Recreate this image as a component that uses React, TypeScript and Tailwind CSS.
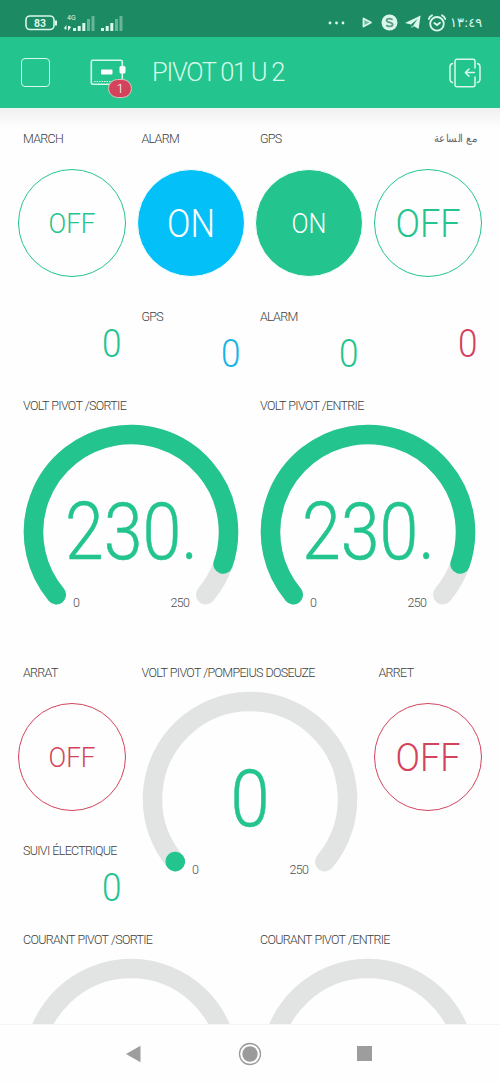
import type { ReactNode } from "react";
import clsx from "clsx";

type Tone = "green" | "blue" | "red";

const textTone: Record<Tone, string> = {
  green: "text-[#23c48e]",
  blue: "text-[#16b4e6]",
  red: "text-[#d3435c]",
};

const fillTone: Record<Tone, string> = {
  green: "bg-[#23c48e]",
  blue: "bg-[#04c0f8]",
  red: "bg-[#d3435c]",
};

const borderTone: Record<Tone, string> = {
  green: "border-[#23c48e]",
  blue: "border-[#04c0f8]",
  red: "border-[#d3435c]",
};

interface WidgetProps {
  className: string;
  label?: string;
  rtl?: boolean;
  children: ReactNode;
}

function Widget({ className, label, rtl, children }: WidgetProps) {
  return (
    <section className={clsx("flex flex-col", className)}>
      {label && (
        <h2
          dir={rtl ? "rtl" : "ltr"}
          className={clsx(
            "h-[22px] leading-[22px] whitespace-nowrap",
            rtl
              ? "origin-right scale-x-92 px-[11px] text-[11px] text-[#6a6a6a] font-['DejaVu_Sans',sans-serif]"
              : "px-2.5 text-[12.5px] font-light tracking-[-0.7px] [word-spacing:0.5px] text-[#404040]",
          )}
        >
          {label}
        </h2>
      )}
      {children}
    </section>
  );
}

interface SwitchProps {
  className: string;
  label: string;
  on?: boolean;
  large?: boolean;
  tone: Tone;
  rtl?: boolean;
}

function SwitchWidget({ className, label, on, large, tone, rtl }: SwitchProps) {
  const width = on ? (large ? 46 : 33) : large ? 63 : 45;
  return (
    <Widget className={className} label={label} rtl={rtl}>
      <button
        className={clsx(
          "mx-auto mt-[19px] size-[108px] rounded-full border",
          on ? [fillTone[tone], "border-white text-white"] : [borderTone[tone], textTone[tone]],
        )}
      >
        <svg viewBox="0 0 106 106" className="size-full">
          <text
            x={(106 - width) / 2 - 1}
            y={large ? 66.5 : 63}
            fontSize={large ? 39 : 28}
            textLength={width + 2}
            lengthAdjust="spacingAndGlyphs"
            fill="currentColor"
          >
            {on ? "ON" : "OFF"}
          </text>
        </svg>
      </button>
    </Widget>
  );
}

interface ValueProps {
  className: string;
  label?: string;
  tone: Tone;
}

function ValueWidget({ className, label, tone }: ValueProps) {
  return (
    <Widget className={className} label={label}>
      <p
        className={clsx(
          "origin-right scale-x-90 pr-[11px] text-right text-[39px] leading-[52px] font-light",
          !label && "pt-3",
          textTone[tone],
        )}
      >
        0
      </p>
    </Widget>
  );
}

const START = 140;
const SWEEP = 260;
const RADIUS = 97.5;

function arc(sweep: number) {
  const point = (deg: number) => {
    const a = (deg * Math.PI) / 180;
    return `${(118 + RADIUS * Math.cos(a)).toFixed(2)} ${(115 + RADIUS * Math.sin(a)).toFixed(2)}`;
  };
  return `M${point(START)}A${RADIUS} ${RADIUS} 0 ${sweep > 180 ? 1 : 0} 1 ${point(START + sweep)}`;
}

interface GaugeProps {
  className: string;
  label: string;
  value?: number;
  max?: number;
}

function GaugeWidget({ className, label, value, max = 250 }: GaugeProps) {
  return (
    <Widget className={className} label={label}>
      <svg viewBox="0 0 237 215" className="h-[215px] w-full" fill="none" strokeWidth="19.5" strokeLinecap="round">
        <path d={arc(SWEEP)} stroke="#e1e4e3" />
        {value !== undefined && (
          <>
            <path d={arc(Math.max((value / max) * SWEEP, 0.1))} stroke="#23c48e" />
            <text
              x={value > 0 ? 52 : 98.5}
              y="141.5"
              textLength={value > 0 ? 133 : 39}
              lengthAdjust="spacingAndGlyphs"
              fontSize="79"
              fill="#23c48e"
              stroke="#23c48e"
              strokeWidth="0.5"
            >
              {value > 0 ? `${value}.` : "0"}
            </text>
            <g stroke="none" fill="#4f4f4f" fontSize="12.5">
              <text x="60" y="190">0</text>
              <text x="157.5" y="190" textLength="19.5">{max}</text>
            </g>
          </>
        )}
      </svg>
    </Widget>
  );
}

function Signal() {
  return (
    <svg width="22" height="16" viewBox="0 0 22 16" fill="#d9f7ea">
      <rect x="0" y="13" width="3" height="3" />
      <rect x="4.7" y="11" width="3" height="5" />
      <rect x="9.3" y="8" width="3" height="8" />
      <rect x="14" y="4" width="3" height="12" opacity=".4" />
      <rect x="18.5" y="1" width="3" height="15" opacity=".4" />
    </svg>
  );
}

function StatusBar() {
  return (
    <div className="flex h-[37px] items-center bg-[#1c8a63] pt-2 pl-[25px] text-[#d9f7ea]">
      <svg width="33" height="16" viewBox="0 0 33 16">
        <rect x="1" y="1" width="28" height="13.5" rx="4" fill="none" stroke="currentColor" strokeWidth="1.6" />
        <path d="M31 5.5v5" stroke="currentColor" strokeWidth="2" />
        <text x="15" y="11.5" textAnchor="middle" fontSize="10.5" fontWeight="700" fill="currentColor">83</text>
      </svg>
      <div className="ml-1.5 flex h-[17px] w-[9px] flex-col justify-between text-[7px] leading-[8px] font-normal">
        <span className="ml-[3px] whitespace-nowrap">4G</span>
        <svg width="7" height="6" viewBox="0 0 7 6" fill="currentColor">
          <path d="M0 3 2.5 0v4.5H1zM7 2.5 4 6V1h2z" />
        </svg>
      </div>
      <div className="flex gap-[6px]">
        <Signal />
        <Signal />
      </div>
      <div className="ml-auto flex items-center">
        <svg width="17" height="4" viewBox="0 0 17 4" fill="currentColor">
          <circle cx="2" cy="2" r="1.4" />
          <circle cx="8.5" cy="2" r="1.4" />
          <circle cx="15" cy="2" r="1.4" />
        </svg>
        <svg className="ml-[17px]" width="11" height="11" viewBox="0 0 11 11">
          <path d="M1.5 1.5 9 5.5l-7.5 4z" fill="#6fb89c" stroke="currentColor" strokeWidth="1.8" strokeLinejoin="round" />
        </svg>
        <svg className="ml-2" width="17" height="17" viewBox="0 0 17 17">
          <circle cx="8.5" cy="8.5" r="8" fill="currentColor" />
          <path
            d="M11.5 5.8C10.5 4.3 5.6 4 5.6 6.5c0 2.4 6 1.3 6 4 0 2.5-5 2.3-6.3.6"
            fill="none"
            stroke="#5a9d84"
            strokeWidth="1.8"
          />
        </svg>
        <svg className="ml-[7px]" width="16" height="15" viewBox="0 0 16 15" fill="currentColor">
          <path d="M0 8 15.6.5 13.6 14 9 11.2 6.5 13 6 9.6z" />
          <path d="M6 9.6 12.5 4 8.2 10.4 6.6 12.5z" fill="#1c8a63" />
        </svg>
        <svg
          className="ml-1.5"
          width="20"
          height="18"
          viewBox="0 0 20 18"
          fill="none"
          stroke="currentColor"
          strokeWidth="1.8"
          strokeLinecap="round"
        >
          <circle cx="10" cy="9.8" r="6.8" />
          <path d="M1.8 5c.4-1.8 1.5-3 3.2-3.7M18.2 5c-.4-1.8-1.5-3-3.2-3.7M7.3 9l2.7 2 3-2.3" />
        </svg>
        <span className="ml-[3px] w-[50px] text-[13px] leading-5 font-normal tracking-[-1px] whitespace-nowrap font-['DejaVu_Sans',sans-serif]">
          ١٣:٤٩
        </span>
      </div>
    </div>
  );
}

function Header() {
  return (
    <header className="flex h-[71px] items-center bg-[#23c48e] pr-[19px] pl-[21px] text-[#d6fae9]">
      <div className="size-[29px] rounded-[4px] border-[1.5px] border-current" />
      <div className="relative ml-10 h-[27px] w-9">
        <svg width="36" height="27" viewBox="0 0 36 27" fill="none" stroke="currentColor" strokeWidth="1.6">
          <rect x="1.3" y="1.3" width="31" height="24" rx="1.5" />
          <path d="M4 22.5h26" strokeDasharray="1.5 1" strokeWidth="1" />
          <rect x="11" y="10.5" width="11.5" height="5" rx="1" fill="white" stroke="none" />
          <rect x="29.5" y="7" width="6" height="7.5" rx="1.5" fill="white" stroke="none" />
        </svg>
        <span className="absolute top-[20px] left-[18px] flex h-[19px] w-6 items-center justify-center rounded-full border-[1.5px] border-[#d9c3bd] bg-[#d3435c] text-[13px] leading-none font-light text-white">
          1
        </span>
      </div>
      <h1 className="ml-[26px] text-[25.5px] leading-none font-light tracking-[-1.3px] whitespace-nowrap">PIVOT 01 U 2</h1>
      <svg
        className="ml-auto"
        width="32"
        height="30"
        viewBox="0 0 32 30"
        fill="none"
        stroke="currentColor"
        strokeWidth="1.5"
        strokeLinecap="round"
        strokeLinejoin="round"
      >
        <path d="M26 10V3.2A2 2 0 0 0 24 1.2H8A2 2 0 0 0 6 3.2v23.6a2 2 0 0 0 2 2h16a2 2 0 0 0 2-2V19" />
        <path d="M3.5 5.5Q1 6 1 9v12q0 3 2.5 3.5M28.5 5.5Q31 6 31 9v12q0 3-2.5 3.5" />
        <path d="M25.5 14.6h-9M20 11l-3.6 3.6 3.6 3.6" />
      </svg>
    </header>
  );
}

function NavBar() {
  return (
    <nav className="flex h-[60px] border-t border-[#f5f5f5] bg-[#fefefe] pl-[125px]">
      <svg className="mt-5" width="17" height="18" viewBox="0 0 17 18">
        <path d="M1 9 15.5.8v16.4z" fill="#9d9d9d" />
      </svg>
      <svg className="mt-[17px] ml-[96px]" width="24" height="24" viewBox="0 0 24 24">
        <circle cx="12" cy="12" r="10.5" fill="none" stroke="#9a9a9a" strokeWidth="1.3" />
        <circle cx="12" cy="12" r="7.7" fill="#9a9a9a" />
      </svg>
      <div className="mt-[21px] ml-[95px] size-[15px] bg-[#9d9d9d]" />
    </nav>
  );
}

export default function App() {
  return (
    <div className="flex h-[1084px] w-[500px] flex-col overflow-hidden bg-[#fefefe] font-['Roboto','Liberation_Sans',sans-serif] font-light">
      <StatusBar />
      <Header />
      <main className="h-[916px] shrink-0 overflow-hidden bg-[linear-gradient(#f0f0f0,#fefefe_20px)] px-[13px] pt-5">
        <div className="grid auto-rows-[89px] grid-cols-4">
          <SwitchWidget className="col-start-1 row-span-2 row-start-1" label="MARCH" tone="green" />
          <SwitchWidget className="col-start-2 row-span-2 row-start-1" label="ALARM" tone="blue" on large />
          <SwitchWidget className="col-start-3 row-span-2 row-start-1" label="GPS" tone="green" on />
          <SwitchWidget className="col-start-4 row-span-2 row-start-1" label="مع الساعة" tone="green" large rtl />

          <ValueWidget className="col-start-1 row-start-3" tone="green" />
          <ValueWidget className="col-start-2 row-start-3" label="GPS" tone="blue" />
          <ValueWidget className="col-start-3 row-start-3" label="ALARM" tone="green" />
          <ValueWidget className="col-start-4 row-start-3" tone="red" />

          <GaugeWidget className="col-span-2 col-start-1 row-span-3 row-start-4" label="VOLT PIVOT /SORTIE" value={230} />
          <GaugeWidget className="col-span-2 col-start-3 row-span-3 row-start-4" label="VOLT PIVOT /ENTRIE" value={230} />

          <SwitchWidget className="col-start-1 row-span-2 row-start-7" label="ARRAT" tone="red" />
          <GaugeWidget
            className="col-span-2 col-start-2 row-span-3 row-start-7"
            label="VOLT PIVOT /POMPEIUS DOSEUZE"
            value={0}
          />
          <SwitchWidget className="col-start-4 row-span-2 row-start-7" label="ARRET" tone="red" large />
          <ValueWidget className="col-start-1 row-start-9" label="SUIVI ÉLECTRIQUE" tone="green" />

          <GaugeWidget className="col-span-2 col-start-1 row-span-3 row-start-10" label="COURANT PIVOT /SORTIE" />
          <GaugeWidget className="col-span-2 col-start-3 row-span-3 row-start-10" label="COURANT PIVOT /ENTRIE" />
        </div>
      </main>
      <NavBar />
    </div>
  );
}
